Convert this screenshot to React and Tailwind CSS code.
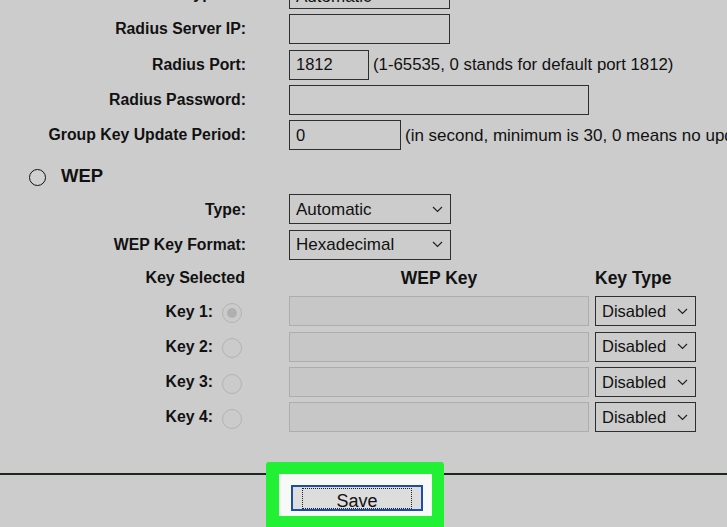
import React from "react";

const Chevron = () => (
  <svg width="11" height="7" viewBox="0 0 11 7" className="shrink-0">
    <polyline points="1,1 5.5,5.5 10,1" fill="none" stroke="#222" strokeWidth="1.2" />
  </svg>
);

function Select({ value, width, size = "text-[17px]", textShift = "" }) {
  return (
    <div
      className={`flex h-[30px] items-center justify-between border-[1.5px] border-[#2e2e2e] pl-[6px] pr-[7px] ${width}`}
    >
      <span className={`${size} leading-none ${textShift}`}>{value}</span>
      <Chevron />
    </div>
  );
}

function Input({ width, value = "", disabled = false }) {
  return (
    <div
      className={`flex h-[30px] items-center pl-[6px] text-[16.5px] leading-none ${width} ${
        disabled
          ? "border border-[#adadad] bg-[#c7c7c7]"
          : "border-[1.5px] border-[#2e2e2e]"
      }`}
    >
      {value}
    </div>
  );
}

function Row({ label, children }) {
  return (
    <div className="flex h-[30px] shrink-0 items-center">
      <div className="w-[246px] shrink-0 text-right text-[15.8px] font-bold">{label}</div>
      <div className="ml-[43px] flex items-center whitespace-nowrap">{children}</div>
    </div>
  );
}

function Radio({ checked }) {
  return (
    <div className="flex h-[20px] w-[20px] items-center justify-center rounded-full border border-[#b3b3b3] bg-[#cbcbcb]">
      {checked && <div className="h-[10px] w-[10px] rounded-full bg-[#b0b0b0]" />}
    </div>
  );
}

function KeyRow({ n, checked }) {
  return (
    <div className="flex h-[30px] shrink-0 items-center">
      <div className="flex w-[246px] shrink-0 items-center justify-end">
        <span className="text-[15.8px] font-bold">Key {n}:</span>
        <div className="ml-[9px] mr-[4px] mt-[3px]">
          <Radio checked={checked} />
        </div>
      </div>
      <div className="ml-[43px]">
        <Input width="w-[300px]" disabled />
      </div>
      <div className="ml-[6px]">
        <Select value="Disabled" width="w-[101px]" size="text-[16.5px]" />
      </div>
    </div>
  );
}

export default function App() {
  return (
    <div className="h-[527px] w-[727px] overflow-hidden bg-[#cccccc] font-['Liberation_Sans',Arial,sans-serif] text-[#111]">
      <div className="flex flex-col gap-[5.33px]">
        {/* WPA section (scrolled) */}
        <div className="-mt-[21px]">
          <Row label="Encryption:">
            <Select value="Automatic" width="w-[161px]" textShift="mt-[4px]" />
          </Row>
        </div>
        <Row label="Radius Server IP:">
          <Input width="w-[161px]" />
        </Row>
        <Row label="Radius Port:">
          <Input width="w-[80px]" value="1812" />
          <span className="ml-[4px] text-[16.8px]">(1-65535, 0 stands for default port 1812)</span>
        </Row>
        <Row label="Radius Password:">
          <Input width="w-[300px]" />
        </Row>
        <Row label="Group Key Update Period:">
          <Input width="w-[112px]" value="0" />
          <span className="ml-[4px] text-[17px]">(in second, minimum is 30, 0 means no update)</span>
        </Row>

        {/* WEP */}
        <div className="flex h-[33.4px] shrink-0 items-center pt-[8px]">
          <div className="ml-[29px] mt-[3px] h-[17px] w-[17px] rounded-full border-[1.5px] border-[#111] bg-[#d0d0d0]" />
          <span className="ml-[15px] text-[18.5px] font-bold">WEP</span>
        </div>
        <Row label="Type:">
          <Select value="Automatic" width="w-[162px]" />
        </Row>
        <Row label="WEP Key Format:">
          <Select value="Hexadecimal" width="w-[162px]" />
        </Row>
        <div className="flex h-[26px] shrink-0 items-center">
          <div className="w-[245px] shrink-0 text-right text-[16px] font-bold">Key Selected</div>
          <div className="ml-[44px] w-[300px] text-center text-[17.5px] font-bold">WEP Key</div>
          <div className="ml-[6px] text-[17.5px] font-bold">Key Type</div>
        </div>
        <KeyRow n={1} checked />
        <KeyRow n={2} />
        <KeyRow n={3} />
        <KeyRow n={4} />
      </div>

      {/* footer */}
      <div className="mt-[40.7px] border-t-2 border-[#1c281c]">
        <div className="relative z-10 -mt-[13px] ml-[266px] h-[80px] w-[178px] rounded-[3px] bg-[#22f035] pl-[13px] pt-[12px]">
          <div className="h-[42px] w-[153px] bg-[#f6f9f6] pl-[12px] pt-[11px]">
            <div className="h-[26px] w-[132px] border-2 border-[#1d4ea6] bg-[#dddddd] px-[9px] pt-[1px]">
              <div className="flex h-[21px] items-end justify-center border border-dotted border-[#222] text-[18px] leading-none">
                <span className="-mb-[2px]">Save</span>
              </div>
            </div>
          </div>
        </div>
      </div>
    </div>
  );
}
